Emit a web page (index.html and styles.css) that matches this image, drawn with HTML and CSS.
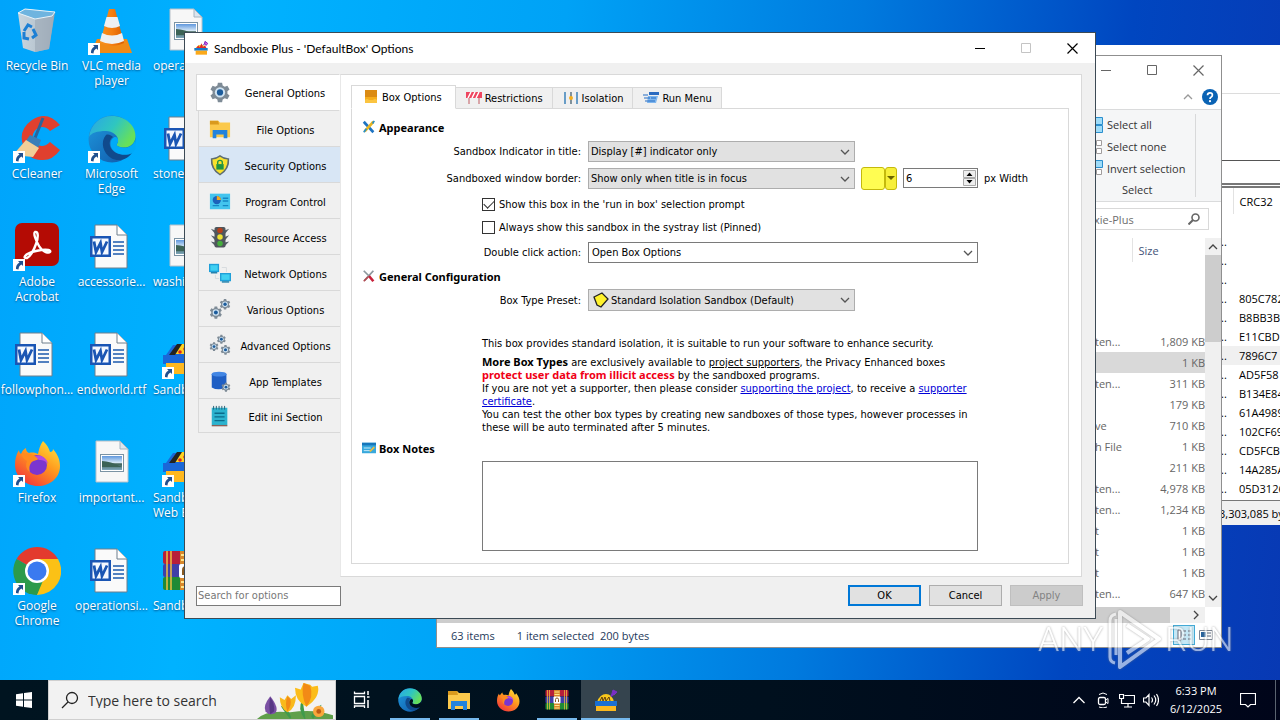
FILE: index.html
```html
<!DOCTYPE html>
<html lang="en">
<head>
<meta charset="utf-8">
<title>Sandboxie Plus</title>
<link rel="stylesheet" href="styles.css">
</head>
<body>
<svg class="defs" aria-hidden="true">
  <defs>
    <linearGradient id="gEdge" x1="0" y1="0" x2="1" y2="0.5"><stop offset="0" stop-color="#2aa5e8"/><stop offset=".55" stop-color="#2fc6c0"/><stop offset="1" stop-color="#67e05a"/></linearGradient>
    <linearGradient id="gEdge2" x1="0" y1="0" x2="1" y2="1"><stop offset="0" stop-color="#1f9be0"/><stop offset="1" stop-color="#0f54a5"/></linearGradient>
    <linearGradient id="gFox" x1="0.9" y1="0" x2="0.2" y2="1"><stop offset="0" stop-color="#ffe63c"/><stop offset=".45" stop-color="#ff9a1e"/><stop offset="1" stop-color="#f2303c"/></linearGradient>
    <linearGradient id="gCone" x1="0" y1="0" x2="1" y2="0"><stop offset="0" stop-color="#f79320"/><stop offset=".5" stop-color="#f57e10"/><stop offset="1" stop-color="#d95d00"/></linearGradient>
    <linearGradient id="gBin" x1="0" y1="0" x2="1" y2="0"><stop offset="0" stop-color="#c9d6df"/><stop offset=".6" stop-color="#b6c3ce"/><stop offset="1" stop-color="#94a2ae"/></linearGradient>
    <linearGradient id="gSky" x1="0" y1="0" x2="0" y2="1"><stop offset="0" stop-color="#5f97dd"/><stop offset=".5" stop-color="#dcecf8"/><stop offset=".55" stop-color="#3c5f54"/><stop offset="1" stop-color="#7fa8bd"/></linearGradient>
    <symbol id="shortcut" viewBox="0 0 12 12"><rect width="12" height="12" fill="#fff"/><path d="M5 2h5v5L8.400 5.400Q5.500 7 5.500 10.500L3 10Q2.600 6 6.500 3.600z" fill="#21508f"/></symbol>
    <symbol id="word" viewBox="6 0 48 48"><path d="M13 2h22l10 10v33H13z" fill="#fafafa" stroke="#6f7f8c"/><path d="M35 2v10h10" fill="#fff" stroke="#6f7f8c"/><path d="M31 19h11M31 23h11M31 27h11M31 31h11" stroke="#1d59ad" stroke-width="1.400"/><rect x="8" y="13" width="21" height="21" fill="#1a55b4"/><rect x="10.500" y="15.500" width="16" height="16" fill="#f4f8ff"/><path d="M12 18.500l2 10.500 4.500-9 1.500 9 5-10.500" fill="none" stroke="#1a55b4" stroke-width="2.800"/></symbol>
    <symbol id="picture" viewBox="6 0 48 48"><path d="M14 2h24l8 8v33H14z" fill="#f7f7f7" stroke="#b8c0c8"/><path d="M38 2v8h8z" fill="#dbe5ee" stroke="#a5b4c0"/><rect x="18.500" y="15.500" width="23" height="17" fill="#fff" stroke="#7b93a4"/><rect x="20" y="17" width="20" height="14" fill="url(#gSky)"/><path d="M20 22q8 0 20 6H20z" fill="#3c6356"/></symbol>
    <symbol id="edge" viewBox="0 0 48 48"><circle cx="24" cy="24" r="23.500" fill="url(#gEdge2)"/><path d="M1 22C3 9 12 1 24 1c14 0 24 10 23.500 21C47 31 38 34 32 32c-5-1-3-3-2-5 1-7-6-11-12-11C9 16 3 18 1 22z" fill="url(#gEdge)"/><path d="M18 20c-6 7-3 18 5 23 7 4 16 2 21-5-10 4-20 0-22-7-1-4 0-7 3-9-2-2-5-3-7-2z" fill="#104a8c"/><path d="M30 27c-1 2-3 4 2 5 6 2 13 0 15.500-8v10l-3 4c-8 4-18 1-21-5-2-4-1-9 3-11 3 0 4 2 3.500 5z" fill="#00aaf8"/></symbol>
    <symbol id="edgebar" viewBox="0 0 48 48"><circle cx="24" cy="24" r="23.500" fill="url(#gEdge2)"/><path d="M1 22C3 9 12 1 24 1c14 0 24 10 23.500 21C47 31 38 34 32 32c-5-1-3-3-2-5 1-7-6-11-12-11C9 16 3 18 1 22z" fill="url(#gEdge)"/><path d="M18 20c-6 7-3 18 5 23 7 4 16 2 21-5-10 4-20 0-22-7-1-4 0-7 3-9-2-2-5-3-7-2z" fill="#104a8c"/><path d="M30 27c-1 2-3 4 2 5 6 2 13 0 15.500-8v10l-3 4c-8 4-18 1-21-5-2-4-1-9 3-11 3 0 4 2 3.500 5z" fill="#00121e"/></symbol>
    <symbol id="firefox" viewBox="0 0 48 48"><path d="M30 2c4 4 6 7 7 11 2 0 3-1 3-3 5 6 7 11 7 17 0 12-10 20-22 20S2 38 2 26c0-6 1-10 4-15 0 2 1 3 2 4 1-3 3-5 5-6 0 3 1 4 3 5 4-1 7 0 9 1 1-5 2-9 5-13z" fill="url(#gFox)"/><circle cx="24" cy="26" r="10" fill="#7b35cf"/><path d="M8 15c6-2 12 0 14 2 2 1 4 1 5 2-1 2-7 2-9 5-2 3-2 6-1 9-5-3-4-8-3-11-2-1-4-3-6-7z" fill="#ff8b20"/><path d="M22 17c6-2 12 2 13 8-3-4-7-4-9-4z" fill="#b64be0"/></symbol>
    <symbol id="chrome" viewBox="0 0 48 48"><path d="M24 24L3.500 12A24 24 0 0 1 45 12z" fill="#e33b2e"/><path d="M24 24L3.500 12A24 24 0 0 0 24 48l10-18z" fill="#2c9a4b"/><path d="M24 24h10L24 48A24 24 0 0 0 45 12H24z" fill="#fbc116"/><circle cx="24" cy="24" r="12" fill="#fff"/><circle cx="24" cy="24" r="9.500" fill="#3a7af0"/></symbol>
    <symbol id="sandbox" viewBox="0 0 48 48"><path d="M4 24l7-10h30l6 10z" fill="#1a67d8"/><path d="M11 23l8-10h22l4 10z" fill="#ffd321"/><path d="M7 24l8-11h5l-7 11z" fill="#222"/><circle cx="18" cy="21" r="1.800" fill="#d22"/><circle cx="23" cy="18" r="1.800" fill="#d22"/><path d="M1 24h46v9H1z" fill="#1a67d8"/><path d="M4 32h44v11H4z" fill="#ffb81f"/></symbol>
    <symbol id="rar" viewBox="0 0 48 48"><rect x="1" y="4" width="46" height="13" rx="2" fill="#b71f3a"/><rect x="1" y="17" width="46" height="13" rx="2" fill="#3f3fa8"/><rect x="1" y="30" width="46" height="13" rx="2" fill="#1f8a35"/><path d="M5 4v39M9 4v39M39 4v39M43 4v39" stroke="#f0c040" stroke-width="1.500"/><path d="M18 4h12v39H18z" fill="#d8872a"/><path d="M19 8h10M19 13h10M19 35h10M19 40h10" stroke="#ffe58a" stroke-width="2"/><rect x="17" y="17" width="14" height="14" rx="2" fill="#fff"/><path d="M21 28v-5q0-3 3-3t3 3v5" fill="none" stroke="#8a5a20" stroke-width="2"/></symbol>
    <symbol id="sandy" viewBox="0 0 24 24"><path d="M3 13Q12 1 21 13z" fill="#f8c81c"/><path d="M5 12l3-4 2 3 3-6 2 6 3-3 2 4z" fill="#e0282c"/><path d="M15 8l4-4M18 2l4 3-2 3-3-2z" stroke="#7a2fc4" fill="#e55ee0" stroke-width="1.500"/><path d="M2 12h20v4H2z" fill="#167ac8"/><path d="M4 16h17v6H4z" fill="#fba91a"/></symbol>
    <symbol id="sandybar" viewBox="0 0 24 24"><path d="M3 14Q6 6 12 6t8 8z" fill="#f8c81c"/><path d="M6 13l2-4 1 4 2-4 1 4 3-4 1 4" fill="none" stroke="#5c3a10"/><path d="M17 9l2-7 4 2-3 3" fill="#7a2fc4" stroke="#7a2fc4"/><path d="M1 13h22v5H1z" fill="#1b6fd0"/><path d="M2 18h20v5H2z" fill="#fbb81e"/></symbol>
    <symbol id="gear" viewBox="0 0 24 24"><path d="M9.700 2h4.600l.6 3 2.300 1.300 2.900-1 2.300 4-2.300 2v2.600l2.300 2-2.300 4-2.900-1-2.300 1.300-.6 3H9.700l-.6-3-2.300-1.300-2.900 1-2.300-4 2.300-2v-2.600l-2.300-2 2.300-4 2.900 1L9.100 5z" fill="#7e8b96"/><circle cx="12" cy="12.500" r="5.600" fill="#cfe3f2"/><circle cx="12" cy="12.500" r="3.400" fill="#1c5c9c"/></symbol>
    <symbol id="folder" viewBox="0 0 24 24"><path d="M1 3h9l2 2h11v16H1z" fill="#fbc94c"/><path d="M1 3h9l1 4H1z" fill="#d99a1e"/><path d="M4 22v-9h16v9h-4v-4H8v4z" fill="#2383dc"/></symbol>
    <symbol id="shield" viewBox="0 0 24 24"><path d="M12 1q5 4 10 3.500Q23 17 12 23.500 1 17 2 4.500 7 5 12 1z" fill="#5d6d72"/><path d="M12 3q4 3 8.300 3Q20.500 16 12 21.500 3.500 16 3.700 6 8 6 12 3z" fill="#f8e12c"/><rect x="8" y="11" width="8" height="6" fill="#1f9443"/><path d="M9.500 11V9q0-2 2.500-2t2.500 2v2" fill="none" stroke="#1f9443" stroke-width="1.500"/></symbol>
    <symbol id="program" viewBox="0 0 24 24"><rect x="1" y="4" width="22" height="17" fill="#43c4ee"/><circle cx="8.500" cy="11" r="4.500" fill="#1c62bb"/><path d="M8.500 11V6.500A4.500 4.500 0 0 1 13 11z" fill="#f6a81f"/><path d="M15 9h6M15 12h6M4 17h7M15 17h6" stroke="#1586c4" stroke-width="1.500"/></symbol>
    <symbol id="traffic" viewBox="0 0 24 24"><path d="M2 3l5 2v4zM22 3l-5 2v4zM2 10l5 2v4zM22 10l-5 2v4zM2 17l5 1v4zM22 17l-5 1v4z" fill="#58616b"/><rect x="6" y="1" width="12" height="22.500" rx="2" fill="#4f565c"/><circle cx="12" cy="5" r="3" fill="#b5401c"/><circle cx="12" cy="12" r="3" fill="#ece132"/><circle cx="12" cy="19" r="3" fill="#45ad3c"/></symbol>
    <symbol id="network" viewBox="0 0 24 24"><rect x="0" y="2" width="11" height="9" fill="#1f9fd8"/><rect x="1.500" y="3.500" width="8" height="6" fill="#3fd0f2"/><rect x="2" y="11" width="7" height="1.500" fill="#1679a8"/><rect x="12" y="12" width="12" height="9" fill="#1f9fd8"/><rect x="13.500" y="13.500" width="9" height="6" fill="#3fd0f2"/><rect x="14" y="21" width="8" height="1.500" fill="#1679a8"/><path d="M14 6h5v5M7 14v4h4" fill="none" stroke="#d5dadd"/></symbol>
    <symbol id="gears2" viewBox="0 0 24 24"><use href="#gear" x="0" y="8" width="15" height="15"/><use href="#gear" x="11" y="0" width="13" height="13"/></symbol>
    <symbol id="gears3" viewBox="0 0 24 24"><use href="#gear" x="8" y="0" width="11" height="11"/><use href="#gear" x="0" y="8" width="11" height="11"/><use href="#gear" x="12" y="11" width="12" height="12"/></symbol>
    <symbol id="database" viewBox="0 0 24 24"><path d="M3 4v15q7 4 16 0V4z" fill="#1f5fc4"/><ellipse cx="11" cy="4.500" rx="8" ry="2.700" fill="#4286e4"/><use href="#gear" x="13" y="13" width="11" height="11"/></symbol>
    <symbol id="notes" viewBox="0 0 24 24"><rect x="3" y="3" width="17" height="19" fill="#2cb3cf"/><path d="M3 22.500h17" stroke="#8b6058" stroke-width="1.500"/><path d="M5 1v4M8 1v4M11 1v4M14 1v4M17 1v4" stroke="#225a70"/><path d="M6 9h11M6 13h11M6 17h11" stroke="#0b6c8c" stroke-width="1.500"/></symbol>
    <symbol id="tabbox" viewBox="0 0 16 16"><path d="M2 1h12v13H2z" fill="#f6ad1c"/><path d="M2 1h12v7H2z" fill="#db8b14"/><path d="M2 11q2-2 4 0h4q2-2 4 0v3H2z" fill="#fbc440"/></symbol>
    <symbol id="barrier" viewBox="0 0 16 16"><path d="M0 2h16v6H0z" fill="#ee4560"/><path d="M2 8l3-6M6 8l3-6M10 8l3-6" stroke="#fff" stroke-width="1.500"/><path d="M3 8v6M13 8v6" stroke="#d08c90" stroke-width="1.500"/></symbol>
    <symbol id="isolation" viewBox="0 0 16 16"><path d="M2 2v12M14 2v12" stroke="#5a94c2" stroke-width="1.800"/><path d="M8 2v12" stroke="#516976" stroke-width="1.400"/><circle cx="8" cy="8" r="2" fill="#f6b01e"/></symbol>
    <symbol id="runmenu" viewBox="0 0 16 16"><path d="M6 2h10v3H6z" fill="#2b6bc0"/><path d="M5 6h10l-2 7H4z" fill="#7fb6ee"/><path d="M0 5h5M1 8h6M2 11h6M8 8h5M8 11h4" stroke="#246cc4"/></symbol>
    <symbol id="appearance" viewBox="0 0 16 16"><path d="M2 2l11 12" stroke="#1d73c2" stroke-width="3"/><path d="M13 2L3 13" stroke="#eab61f" stroke-width="3"/><path d="M12 4l2-3M2 14l3-4" stroke="#2a90c8" stroke-width="2"/></symbol>
    <symbol id="tools" viewBox="0 0 16 16"><path d="M13 2L3 13M2 2l6 6" stroke="#8d989e" stroke-width="2"/><path d="M8 8l5 6" stroke="#c8203a" stroke-width="3"/><path d="M7 9l-5 5" stroke="#b34c54" stroke-width="2"/></symbol>
    <symbol id="boxnotes" viewBox="0 0 16 16"><path d="M0 2h16v12H0z" fill="#38a8dc"/><path d="M0 2h16v3H0z" fill="#1777bb"/><path d="M2 8h8M2 11h7" stroke="#d7f2ff"/><path d="M9 12l5-5" stroke="#f3bd37" stroke-width="2"/></symbol>
    <symbol id="chevron" viewBox="0 0 10 6"><path d="M1 1l4 4 4-4" fill="none" stroke="currentColor" stroke-width="1.300"/></symbol>
    <symbol id="minimize" viewBox="0 0 11 11"><path d="M0 5.500h10" stroke="currentColor"/></symbol>
    <symbol id="maximize" viewBox="0 0 11 11"><path d="M.5.5h9v9h-9z" fill="none" stroke="currentColor"/></symbol>
    <symbol id="close" viewBox="0 0 11 11"><path d="M.5.500l10 10M10.500.500l-10 10" stroke="currentColor" stroke-width="1.200"/></symbol>
  </defs>
</svg>

<main class="desktop">
  <ul class="icons">
    <li class="item"><span class="pic"><svg viewBox="0 0 48 48"><path d="M5 6l7-4 30 3-6 37-14 3-12-4z" fill="url(#gBin)"/><path d="M22 11v34l14-3 5-34z" fill="#a2afbb" opacity=".8"/><path d="M5 6l7-4 30 3-3 4-17 3z" fill="#6fb4df" stroke="#e8f3fa"/><path d="M11 24l4-6 4 2M20 22l3 6-4 3M16 32l-5-1v-6" fill="none" stroke="#1c7fd4" stroke-width="3"/></svg></span>Recycle Bin</li>
    <li class="item"><span class="pic"><svg viewBox="0 0 48 48"><path d="M9 32h30l5 14H3z" fill="#f08a16"/><path d="M21 2h6l9 34q-12 6-24 0z" fill="url(#gCone)"/><path d="M18.500 10h11l2.500 9q-8 4-16 0zM14 26q10 5 20 0l2 8q-12 6-24 0z" fill="#eef0f2"/></svg><svg class="arrow"><use href="#shortcut"/></svg></span>VLC media player</li>
    <li class="item edge-clipped"><span class="pic"><svg><use href="#picture"/></svg></span>operat</li>

    <li class="item"><span class="pic"><svg viewBox="0 0 48 48"><path d="M47 10Q34-5 19 5 5 15 10 30q5 16 20 15 10 0 17-10l-10-8q-6 6-12 3-7-4-5-11 2-6 9-7 5 0 8 4z" fill="#e0402e"/><path d="M30 3l-8 20" stroke="#2d6499" stroke-width="3"/><path d="M17 20l11 5-3 8-12-7z" fill="#3a7fb8"/><path d="M13 25l13 8-6 9-20-2z" fill="#f1cf98"/></svg><svg class="arrow"><use href="#shortcut"/></svg></span>CCleaner</li>
    <li class="item"><span class="pic"><svg><use href="#edge"/></svg><svg class="arrow"><use href="#shortcut"/></svg></span>Microsoft Edge</li>
    <li class="item edge-clipped"><span class="pic"><svg><use href="#word"/></svg></span>stone</li>

    <li class="item"><span class="pic"><svg viewBox="0 0 48 48"><rect x="2" y="0" width="44" height="43" rx="7" fill="#b40b04"/><path d="M22 9c4-1 3 7 1 12-2 6-6 13-9 14-4 1-4-4 9-7s15 0 14 1-7 1-11-6c-3-5-6-13-4-14z" fill="none" stroke="#fff" stroke-width="2.400"/></svg><svg class="arrow"><use href="#shortcut"/></svg></span>Adobe Acrobat</li>
    <li class="item"><span class="pic"><svg><use href="#word"/></svg></span>accessorie...</li>
    <li class="item edge-clipped"><span class="pic"><svg><use href="#picture"/></svg></span>washi</li>

    <li class="item"><span class="pic"><svg><use href="#word"/></svg></span>followphon...</li>
    <li class="item"><span class="pic"><svg><use href="#word"/></svg></span>endworld.rtf</li>
    <li class="item edge-clipped"><span class="pic"><svg><use href="#sandbox"/></svg><svg class="arrow"><use href="#shortcut"/></svg></span>Sandb</li>

    <li class="item"><span class="pic"><svg><use href="#firefox"/></svg><svg class="arrow"><use href="#shortcut"/></svg></span>Firefox</li>
    <li class="item"><span class="pic"><svg><use href="#picture"/></svg></span>important...</li>
    <li class="item edge-clipped"><span class="pic"><svg><use href="#sandbox"/></svg><svg class="arrow"><use href="#shortcut"/></svg></span>Sandb<br>Web B</li>

    <li class="item"><span class="pic"><svg><use href="#chrome"/></svg><svg class="arrow"><use href="#shortcut"/></svg></span>Google Chrome</li>
    <li class="item"><span class="pic"><svg><use href="#word"/></svg></span>operationsi...</li>
    <li class="item edge-clipped"><span class="pic"><svg><use href="#rar"/></svg></span>Sandb</li>
  </ul>

  <section class="window archive">
    <div class="archive-menu"></div>
    <div class="archive-tools"></div>
    <div class="archive-path"></div>
    <table class="archive-list">
      <thead><tr><th></th><th>CRC32</th></tr></thead>
      <tbody>
        <tr><td>..</td><td></td></tr>
        <tr><td>..</td><td></td></tr>
        <tr><td>..</td><td></td></tr>
        <tr><td>..</td><td>805C782</td></tr>
        <tr><td>..</td><td>B8BB3B</td></tr>
        <tr><td>..</td><td>E11CBD</td></tr>
        <tr class="current"><td>..</td><td>7896C7</td></tr>
        <tr><td>..</td><td>AD5F58</td></tr>
        <tr><td>..</td><td>B134E84</td></tr>
        <tr><td>..</td><td>61A4989</td></tr>
        <tr><td>..</td><td>102CF69</td></tr>
        <tr><td>..</td><td>CD5FCB</td></tr>
        <tr><td>..</td><td>14A285A</td></tr>
        <tr><td>..</td><td>05D3126</td></tr>
      </tbody>
    </table>
    <footer class="archive-status">3,303,085 by</footer>
  </section>

  <section class="window explorer">
    <header class="explorer-title">
      <button class="cap" aria-label="Minimize"><svg><use href="#minimize"/></svg></button>
      <button class="cap" aria-label="Maximize"><svg><use href="#maximize"/></svg></button>
      <button class="cap" aria-label="Close"><svg><use href="#close"/></svg></button>
    </header>
    <div class="explorer-tabs">
      <svg class="collapse"><use href="#chevron"/></svg>
      <svg class="help" viewBox="0 0 16 16"><circle cx="8" cy="8" r="8" fill="#0a63b4"/><path d="M5.500 6.200Q5.600 3.800 8 3.800t2.400 2.200Q10.400 7.400 9 8.200 8 8.800 8 10" fill="none" stroke="#fff" stroke-width="1.700"/><circle cx="8" cy="12.200" r="1.100" fill="#fff"/></svg>
    </div>
    <div class="ribbon">
      <div class="ribbon-group">
        <button class="rb"><svg viewBox="0 0 8 16"><path d="M.5.500h7v7h-7zM.5 8.500h7v7h-7z" fill="#9fdcf8" stroke="#2a8fce"/></svg>Select all</button>
        <button class="rb"><svg viewBox="0 0 8 16"><path d="M1.500 1.500h5v5h-5zM1.500 9.500h5v5h-5z" fill="#fff" stroke="#a09c9c"/></svg>Select none</button>
        <button class="rb"><svg viewBox="0 0 8 16"><path d="M.5.500h7v7h-7z" fill="#9fdcf8" stroke="#2a8fce"/><path d="M1.500 9.500h5v5h-5z" fill="#fff" stroke="#a09c9c"/></svg>Invert selection</button>
        <span class="ribbon-name">Select</span>
      </div>
    </div>
    <div class="address">
      <label class="find"><input type="text" value="xie-Plus" aria-label="Search"><svg viewBox="0 0 12 12"><circle cx="7.500" cy="4.500" r="3.500" fill="none" stroke="#666" stroke-width="1.600"/><path d="M5 7l-4.500 4.500" stroke="#666" stroke-width="2"/></svg></label>
    </div>
    <div class="files">
      <table class="file-list">
        <thead><tr><th></th><th>Size</th></tr></thead>
        <tbody>
          <tr class="spacer"><td></td><td></td></tr>
          <tr><td>ten...</td><td>1,809 KB</td></tr>
          <tr class="chosen"><td></td><td>1 KB</td></tr>
          <tr><td>ten...</td><td>311 KB</td></tr>
          <tr><td></td><td>179 KB</td></tr>
          <tr><td>ve</td><td>710 KB</td></tr>
          <tr><td>h File</td><td>1 KB</td></tr>
          <tr><td></td><td>211 KB</td></tr>
          <tr><td>ten...</td><td>4,978 KB</td></tr>
          <tr><td>ten...</td><td>1,234 KB</td></tr>
          <tr><td>t</td><td>1 KB</td></tr>
          <tr><td>t</td><td>1 KB</td></tr>
          <tr><td>t</td><td>1 KB</td></tr>
          <tr><td>ten...</td><td>647 KB</td></tr>
        </tbody>
      </table>
      <div class="vscroll"><svg class="up"><use href="#chevron"/></svg><span class="vthumb"></span><svg class="down"><use href="#chevron"/></svg></div>
    </div>
    <div class="hscroll"><span class="hthumb"></span><svg><use href="#chevron"/></svg></div>
    <footer class="explorer-status">
      <span>63 items</span><span>1 item selected&nbsp; 200 bytes</span>
      <svg class="view on" viewBox="0 0 22 20"><rect x=".5" y=".5" width="21" height="19" fill="#c5e8f6" stroke="#43aad6"/><path d="M5 5h3v10H5zM10 6h3M15 6h3M10 10h3M15 10h3M10 14h3M15 14h3" fill="#fff" stroke="#667"/></svg>
      <svg class="view" viewBox="0 0 22 20"><path d="M4.500 5.500h13v9h-13z" fill="#fff" stroke="#7e8795"/><path d="M6 7h5v5H6z" fill="#28639c"/><path d="M12 8h4M12 11h4" stroke="#58677a"/></svg>
    </footer>
  </section>

  <section class="window dialog">
    <header class="dialog-title">
      <svg class="app"><use href="#sandy"/></svg>
      <h1>Sandboxie Plus - 'DefaultBox' Options</h1>
      <button class="cap" aria-label="Minimize"><svg><use href="#minimize"/></svg></button>
      <button class="cap off" aria-label="Maximize" disabled><svg><use href="#maximize"/></svg></button>
      <button class="cap" aria-label="Close"><svg><use href="#close"/></svg></button>
    </header>
    <div class="dialog-body">
      <nav class="side">
        <button class="stab active"><svg><use href="#gear"/></svg><span>General Options</span></button>
        <button class="stab"><svg><use href="#folder"/></svg><span>File Options</span></button>
        <button class="stab hover"><svg><use href="#shield"/></svg><span>Security Options</span></button>
        <button class="stab"><svg><use href="#program"/></svg><span>Program Control</span></button>
        <button class="stab"><svg><use href="#traffic"/></svg><span>Resource Access</span></button>
        <button class="stab"><svg><use href="#network"/></svg><span>Network Options</span></button>
        <button class="stab"><svg><use href="#gears2"/></svg><span>Various Options</span></button>
        <button class="stab"><svg><use href="#gears3"/></svg><span>Advanced Options</span></button>
        <button class="stab"><svg><use href="#database"/></svg><span>App Templates</span></button>
        <button class="stab"><svg><use href="#notes"/></svg><span>Edit ini Section</span></button>
      </nav>
      <div class="page">
        <div class="tabs">
          <button class="tab active"><svg><use href="#tabbox"/></svg>Box Options</button>
          <button class="tab"><svg><use href="#barrier"/></svg>Restrictions</button>
          <button class="tab"><svg><use href="#isolation"/></svg>Isolation</button>
          <button class="tab"><svg><use href="#runmenu"/></svg>Run Menu</button>
        </div>
        <form class="panel">
          <h2><svg><use href="#appearance"/></svg>Appearance</h2>
          <div class="row">
            <label for="ind">Sandbox Indicator in title:</label>
            <span class="pick"><select id="ind"><option>Display [#] indicator only</option></select><svg><use href="#chevron"/></svg></span>
          </div>
          <div class="row">
            <label for="bor">Sandboxed window border:</label>
            <span class="pick"><select id="bor"><option>Show only when title is in focus</option></select><svg><use href="#chevron"/></svg></span>
            <button type="button" class="colour" aria-label="Border colour"><span class="swatch"></span><span class="drop"><svg viewBox="0 0 8 4"><path d="M0 0h8L4 4z" fill="#6b6400"/></svg></span></button>
            <span class="spin"><input id="wid" type="text" value="6"><svg viewBox="0 0 13 16"><path d="M.5.500h12v7H.5zM.5 8.500h12v7H.5z" fill="#eee" stroke="#aaa"/><path d="M3.500 6h6l-3-3.500zM3.500 10h6l-3 3.500z" fill="#000"/></svg></span>
            <label class="unit" for="wid">px Width</label>
          </div>
          <label class="check"><input type="checkbox" checked>Show this box in the 'run in box' selection prompt</label>
          <label class="check second"><input type="checkbox">Always show this sandbox in the systray list (Pinned)</label>
          <div class="row">
            <label for="dbl">Double click action:</label>
            <span class="pick wide"><select id="dbl"><option>Open Box Options</option></select><svg><use href="#chevron"/></svg></span>
          </div>
          <h2><svg><use href="#tools"/></svg>General Configuration</h2>
          <div class="row">
            <label for="pre">Box Type Preset:</label>
            <span class="pick preset"><svg class="gem" viewBox="0 0 16 16"><path d="M1 5l8-4 6 6-7 8-4-2z" fill="#fff22c" stroke="#222" stroke-width="1.300"/></svg><select id="pre"><option>Standard Isolation Sandbox (Default)</option></select><svg><use href="#chevron"/></svg></span>
          </div>
          <div class="about">
            <p>This box provides standard isolation, it is suitable to run your software to enhance security.</p>
            <p><b>More Box Types</b> are exclusively available to <u>project supporters</u>, the Privacy Enhanced boxes<br><b class="red">protect user data from illicit access</b> by the sandboxed programs.<br>If you are not yet a supporter, then please consider <a href="#project">supporting the project</a>, to receive a <a href="#certificate">supporter<br>certificate</a>.<br>You can test the other box types by creating new sandboxes of those types, however processes in<br>these will be auto terminated after 5 minutes.</p>
          </div>
          <h2><svg><use href="#boxnotes"/></svg>Box Notes</h2>
          <textarea class="notes" aria-label="Box Notes"></textarea>
        </form>
      </div>
    </div>
    <footer class="dialog-foot">
      <input class="search" type="text" placeholder="Search for options" aria-label="Search for options">
      <button class="btn primary">OK</button>
      <button class="btn">Cancel</button>
      <button class="btn" disabled>Apply</button>
    </footer>
  </section>

  <div class="watermark"><span>ANY</span><svg viewBox="0 0 56 64"><path d="M14 5L53 32 14 60zM21 18l21 14-21 14" fill="none" stroke="#fff" stroke-width="4" stroke-linejoin="round"/><path d="M10 7Q4 8 4 14v36q0 5 5 6M10 12v36" fill="none" stroke="#fff" stroke-width="3"/></svg><span>RUN</span></div>
</main>

<footer class="taskbar">
  <button class="task start" aria-label="Start"><svg viewBox="0 0 16 16"><path d="M0 2.200L7 1.200v6.400H0zM8 1.100L16 0v7.600H8zM0 8.400h7v6.400l-7-1zM8 8.400h8V16l-8-1.100z" fill="#fff"/></svg></button>
  <label class="searchbox">
    <svg class="lens" viewBox="0 0 18 18"><circle cx="11" cy="7" r="5.500" fill="none" stroke="#222" stroke-width="1.300"/><path d="M7 11l-6 6" stroke="#222" stroke-width="1.300"/></svg>
    <input type="text" placeholder="Type here to search">
    <svg class="flowers" viewBox="0 0 80 40"><path d="M0 40Q10 30 35 33 60 29 80 36v4z" fill="#5f9f4a"/><path d="M35 40q-8-10-10-14 7 2 11 12zM50 40q-8-12-2-20l3 20zM57 37q5-10 11-12-3 8-9 15z" fill="#3f9a4c"/><path d="M14 16q-8 10-5 16 4 5 10 2 5-5-5-18z" fill="#7b51a4"/><path d="M14 17q-2 8 0 18l4-3q1-8-4-15z" fill="#583785"/><path d="M24 17l5 3 3-5 4 4 5-4q0 14-9 18-8-5-8-16z" fill="#f9b91c"/><path d="M40 7l6 2 3-7 7 2 2 2 6-1q3 12-12 22-12-6-12-20z" fill="#fbbc19"/><path d="M49 2q-3 12 3 25 8-10 4-22zM32 16q-3 8 0 16 5-7 3-13z" fill="#f28a16"/><circle cx="65" cy="32" r="6" fill="#f9a63c"/><circle cx="65" cy="32" r="2.500" fill="#bf5b14"/></svg>
  </label>
  <button class="task" aria-label="Task View"><svg viewBox="0 0 24 24"><path d="M5.500 8.500h10v7h-10zM5.500 3.500v2h10v-2M5.500 20v-2h10v2" fill="none" stroke="#fff" stroke-width="1.300"/><path d="M19 3v4M19 12v8M18 9h2.500" stroke="#fff" stroke-width="1.500"/></svg></button>
  <button class="task run" aria-label="Edge"><svg><use href="#edgebar"/></svg></button>
  <button class="task run" aria-label="Explorer"><svg><use href="#folder"/></svg></button>
  <button class="task" aria-label="Firefox"><svg><use href="#firefox"/></svg></button>
  <button class="task run" aria-label="WinRAR"><svg><use href="#rar"/></svg></button>
  <button class="task run current" aria-label="Sandboxie"><svg><use href="#sandybar"/></svg></button>
  <div class="tray">
    <svg viewBox="0 0 16 16"><path d="M2.500 11L8 5.500l5.500 5.500" fill="none" stroke="#fff" stroke-width="1.300"/></svg>
    <svg viewBox="0 0 16 16"><rect x="3.500" y="5.500" width="7" height="7" rx="1.500" fill="none" stroke="#fff" stroke-width="1.300"/><path d="M10.500 8l2.500-1.500v5L10.500 10M4 2.500Q8-.5 12 2.500M4 15q4 2 8 0" fill="none" stroke="#fff"/></svg>
    <svg viewBox="0 0 16 16"><path d="M5.500 3.500h10v8h-13V8M9 12v3M5 15h8M.500 2.500h4v4h-4zM2.500 7v2" fill="none" stroke="#fff" stroke-width="1.200"/></svg>
    <svg viewBox="0 0 16 16"><path d="M.5 6h2.500l3-3.500v11L3 10H.5zM8.500 5.500q2 2.500 0 5M11 3.500q3.500 4.500 0 9M13.500 2q4 6 0 12" fill="none" stroke="#fff" stroke-width="1.200"/></svg>
    <div class="clock">6:33 PM<br>6/12/2025</div>
    <svg class="note" viewBox="0 0 16 16"><path d="M.5 1.500h15v11h-5L8 15l-2.500-2.500h-5z" fill="none" stroke="#fff" stroke-width="1.200"/></svg>
    <span class="peek"></span>
  </div>
</footer>
</body>
</html>
```
FILE: styles.css
```css
* { box-sizing: border-box; }

body {
  margin: 0;
  height: 100vh;
  display: flex;
  flex-direction: column;
  overflow: hidden;
  font: 12px/15px "Open Sans", "Noto Sans", sans-serif;
  color: #000;
}

button, input, select, textarea { font: inherit; color: inherit; }
button { border: 0; background: none; padding: 0; }
.defs { position: absolute; width: 0; height: 0; }

.desktop {
  position: relative;
  flex: 1;
  min-height: 0;
  overflow: hidden;
  background: linear-gradient(96deg, #00a4fb 0%, #00b2ff 18%, #00a2f6 42%, #007ade 64%, #0046c0 84%, #0839b4 100%);
}

/* Desktop icons */
.icons {
  list-style: none;
  margin: 0;
  padding: 7px 0 0;
  display: grid;
  grid-template-columns: 74px 75px 75px;
  grid-auto-rows: 108px;
}
.item {
  display: flex;
  flex-direction: column;
  align-items: center;
  text-align: center;
  font-size: 12px;
  line-height: 15px;
  color: #fff;
  text-shadow: 0 1px 2px rgba(0, 40, 90, .7);
}
.item.edge-clipped { align-items: flex-start; text-align: left; padding-left: 4px; }
.item.edge-clipped .pic { margin-left: 9px; }
.pic { position: relative; width: 48px; height: 48px; margin-bottom: 3px; flex: none; }
.pic svg { display: block; width: 48px; height: 48px; }
.pic .arrow { position: absolute; left: 0; bottom: 0; width: 12px; height: 12px; }

.window { position: absolute; display: flex; flex-direction: column; background: #fff; }

/* Archive manager */
.archive { left: 1000px; right: 0; top: 45px; height: 480px; overflow: hidden; font-size: 11px; }
.archive-menu { height: 49px; border-bottom: 1px solid #dcdcdc; }
.archive-tools { height: 67px; border-bottom: 1px solid #555; }
.archive-path { height: 27px; border-bottom: 5px double #777; }
.archive-list { border-collapse: collapse; table-layout: fixed; width: 300px; margin-bottom: auto; }
.archive-list th { height: 26px; padding: 0 0 0 6px; font-weight: 400; text-align: left; }
.archive-list th:first-child { width: 233px; border-right: 1px solid #e2e2e2; }
.archive-list thead::after { content: ""; display: block; height: 18px; }
.archive-list td { height: 19px; line-height: 15px; padding: 0 0 0 6px; white-space: nowrap; }
.archive-list td:first-child { padding-left: 221px; }
.archive-list .current { background: #f0f0f0; }
.archive-status { height: 25px; padding: 5px 0 0 219px; background: #f0f0f0; border-top: 1px solid #777; white-space: nowrap; }

/* File explorer */
.explorer { left: 436px; width: 786px; top: 55px; height: 593px; border: 1px solid #8f8f8f; color: #666; font-size: 11px; }
.cap { width: 46px; height: 29px; display: grid; place-items: center; }
.cap svg { width: 11px; height: 11px; }
.explorer-title { display: flex; justify-content: flex-end; height: 28px; }
.explorer-tabs { display: flex; justify-content: flex-end; align-items: center; gap: 9px; height: 26px; padding-right: 3px; border-bottom: 1px solid #dadbdc; }
.collapse { width: 10px; height: 6px; color: #999; transform: rotate(180deg); }
.help { width: 16px; height: 16px; }
.ribbon { display: flex; justify-content: flex-end; height: 92px; padding: 4px 25px 4px 0; background: #f5f6f7; border-bottom: 1px solid #dadbdc; color: #333; }
.ribbon-group { display: flex; flex-direction: column; width: 101px; border-right: 1px solid #d8d9da; }
.rb { display: flex; align-items: center; gap: 4px; height: 22px; white-space: nowrap; }
.rb svg { width: 8px; height: 16px; }
.ribbon-name { padding-left: 27px; margin-top: 3px; }
.address { height: 36px; display: flex; justify-content: flex-end; padding: 6px 12px 8px 0; }
.find { width: 230px; display: flex; align-items: center; padding: 0 8px 0 114px; border: 1px solid #d9d9d9; }
.find input { border: 0; padding: 0; flex: 1; min-width: 0; outline: 0; color: #6d6d6d; }
.find svg { width: 12px; height: 12px; }
.files { flex: 1; min-height: 0; display: flex; }
.file-list { flex: 1; border-collapse: collapse; table-layout: fixed; margin-bottom: auto; }
.file-list th { height: 24px; padding: 0 0 0 6px; text-align: left; font-weight: 400; color: #435379; }
.file-list th:first-child { border-right: 1px solid #e3e3e3; }
.file-list th:last-child { width: 73px; }
.file-list td { height: 21px; padding: 0 0 0 6px; text-align: right; white-space: nowrap; }
.file-list td:first-child { text-align: left; padding-left: 658px; }
.file-list .spacer td { height: 69px; }
.chosen { background: #d9d9d9; }
.vscroll { width: 16px; display: flex; flex-direction: column; align-items: center; background: #f0f0f0; color: #444; padding: 6px 0; }
.vscroll svg { width: 10px; height: 6px; }
.vscroll .up { transform: rotate(180deg); }
.vthumb { width: 16px; height: 87px; margin: 5px 0 auto; background: #cdcdcd; }
.hscroll { display: flex; align-items: center; height: 16px; margin-right: 16px; background: #f0f0f0; color: #444; }
.hscroll svg { width: 10px; height: 6px; margin-right: 4px; transform: rotate(-90deg); }
.hthumb { flex: 1; height: 16px; margin-right: 21px; background: #cdcdcd; }
.explorer-status { height: 24px; display: flex; align-items: center; gap: 22px; padding: 0 4px 0 14px; color: #1e395b; }
.view { width: 22px; height: 20px; }
.view.on { margin-left: auto; margin-right: -22px; }

/* Options dialog */
.dialog { left: 184px; width: 912px; top: 32px; height: 587px; border: 1px solid #3c4a55; background: #f0f0f0; font-size: 11px; line-height: 13px; font-family: "DejaVu Sans Condensed", Roboto, sans-serif; }
.dialog-title { display: flex; align-items: center; height: 30px; background: #fff; }
.dialog-title .app { width: 16px; height: 16px; margin: 0 5px 0 8px; }
.dialog-title h1 { margin: 0 auto 0 0; font: 12px/15px Lato, sans-serif; }
.off { color: #c4c4c4; }
.dialog-body { display: flex; flex: 1; min-height: 0; padding: 11px 13px 8px 11px; }
.side { width: 144px; display: flex; flex-direction: column; }
.stab { display: flex; align-items: center; height: 36px; margin-left: 2px; padding: 3px 0 0 10px; background: #f0f0f0; border: 1px solid #d9d9d9; border-top: 0; flex: none; }
.stab svg { width: 22px; height: 22px; flex: none; margin-bottom: 3px; }
.stab span { flex: 1; white-space: nowrap; text-align: center; }
.stab:last-child { height: 34px; }
.stab + .stab { border-right: 0; }
.stab.active { height: 37px; margin-left: 0; padding: 1px 0 0 12px; background: #fff; border: 1px solid #d9d9d9; border-right-color: #fff; }
.stab.hover { background: #d8e6f5; }
.page { flex: 1; display: flex; flex-direction: column; padding: 10px 12px 12px 10px; background: #fff; border: 1px solid #d9d9d9; border-left-color: #e8e8e8; }
.tabs { display: flex; align-items: flex-end; height: 24px; margin-bottom: -1px; }
.tab { position: relative; display: flex; align-items: center; gap: 3px; height: 22px; padding: 0 9px 0 10px; background: #f0f0f0; border: 1px solid #d9d9d9; border-left: 0; white-space: nowrap; }
.tab svg { width: 16px; height: 16px; }
.tab.active { height: 24px; padding: 0 13px 0 11px; border-left: 1px solid #d9d9d9; border-bottom-color: #fff; background: #fff; }
.panel { flex: 1; padding: 10px 11px 11px 10px; border: 1px solid #d9d9d9; }
h2 { display: flex; align-items: center; gap: 3px; height: 16px; margin: 0; font: bold 11px/13px "Noto Sans", sans-serif; }
h2 svg { width: 14px; height: 14px; }
.row { display: flex; align-items: center; height: 22px; margin: 5px 0; }
.row > label:first-child { width: 219px; margin-right: 7px; text-align: right; white-space: nowrap; }
.pick { position: relative; width: 267px; height: 21px; display: flex; border: 1px solid #adadad; background: #e1e1e1; }
.pick select { flex: 1; width: 100%; padding: 0 20px 0 2px; border: 0; background: transparent; appearance: none; outline: 0; }
.pick > svg { position: absolute; right: 4px; top: 7px; width: 10px; height: 6px; color: #555; }
.pick.wide { width: 390px; border-color: #7a7a7a; background: #fff; }
.pick.wide select { padding-left: 3px; }
.pick.preset { height: 22px; }
.pick > .gem { left: 4px; top: 2px; width: 16px; height: 16px; }
.pick.preset select { padding-left: 22px; }
.colour { display: flex; width: 36px; height: 23px; margin: 0 6px; }
.swatch, .drop { height: 23px; border: 1px solid #c4b90c; border-radius: 3px; background: #fffd52; }
.swatch { flex: 1; }
.drop { width: 12px; display: grid; place-items: center; background: #f7ef3a; }
.drop svg { width: 8px; height: 4px; }
.spin { display: flex; width: 75px; height: 20px; padding: 1px; border: 1px solid #7a7a7a; background: #fff; }
.spin input { flex: 1; min-width: 0; border: 0; padding: 0 1px; outline: 0; }
.spin svg { width: 13px; height: 16px; }
.unit { margin-left: 6px; }
.check { display: flex; align-items: center; gap: 4px; height: 15px; margin: 8px 0 8px 120px; white-space: nowrap; }
.check input { appearance: none; width: 13px; height: 13px; margin: 0; border: 1px solid #333; background: #fff; display: grid; place-items: center; }
.check input:checked::after { content: ""; width: 9px; height: 5px; margin-bottom: 3px; border: solid #333; border-width: 0 0 1px 1px; transform: rotate(-45deg); }
.check.second { margin-bottom: 6px; }
.about { height: 98px; margin: 26px 0 5px 120px; white-space: nowrap; }
.about p { margin: 0 0 6px; }
.about b { font-family: "Noto Sans", sans-serif; line-height: 1; }
.red { color: #f00016; }
a { color: #0000d8; }
.notes { display: block; width: 496px; height: 90px; margin: 5px 0 0 120px; border: 1px solid #7a7a7a; resize: none; outline: 0; }
.dialog-foot { display: flex; align-items: center; gap: 8px; padding: 0 12px 12px 11px; }
.search { width: 145px; height: 20px; margin-right: auto; padding: 0 1px; border: 1px solid #7a7a7a; background: #fff; }
.search::placeholder { color: #777; }
.btn { width: 73px; height: 21px; border: 1px solid #adadad; background: #e1e1e1; }
.btn.primary { border: 2px solid #0078d7; }
.btn:disabled { color: #838383; background: #ccc; border-color: #bfbfbf; }

.watermark { position: absolute; left: 1038px; top: 607px; display: flex; align-items: center; gap: 3px; color: #fff; opacity: .6; font: 300 34px/64px Roboto, sans-serif; filter: drop-shadow(0 0 1px #777); }
.watermark svg { width: 56px; height: 64px; }

/* Taskbar */
.taskbar { flex: none; display: flex; height: 40px; background: linear-gradient(90deg, #001420, #00101e 60%, #00051a); color: #fff; }
.task { width: 49px; display: grid; place-items: center; }
.task svg { width: 24px; height: 24px; }
.task.start { width: 48px; }
.start svg { width: 16px; height: 16px; }
.run { position: relative; }
.run::after { content: ""; position: absolute; left: 5px; right: 4px; bottom: 0; height: 2px; background: #76b9ed; }
.run.current { background: #35444e; }
.run.current::after { left: 0; right: 0; }
.searchbox { width: 288px; display: flex; align-items: center; padding-left: 12px; background: #f2f2f2; border: 1px solid #cfcfcf; color: #222; }
.searchbox input { flex: 1; min-width: 0; border: 0; padding: 0 0 0 9px; background: none; outline: 0; font-size: 14px; }
.searchbox input::placeholder { color: #333; }
.lens { width: 18px; height: 18px; }
.flowers { width: 80px; height: 38px; }
.tray { margin-left: auto; display: flex; align-items: center; gap: 8px; padding-right: 4px; }
.tray svg { width: 16px; height: 16px; }
.clock { width: 58px; text-align: center; font-size: 11px; line-height: 18px; white-space: nowrap; }
.tray .note { margin: 0 11px 0 7px; }
.peek { width: 1px; height: 40px; background: #5a6470; }
```
